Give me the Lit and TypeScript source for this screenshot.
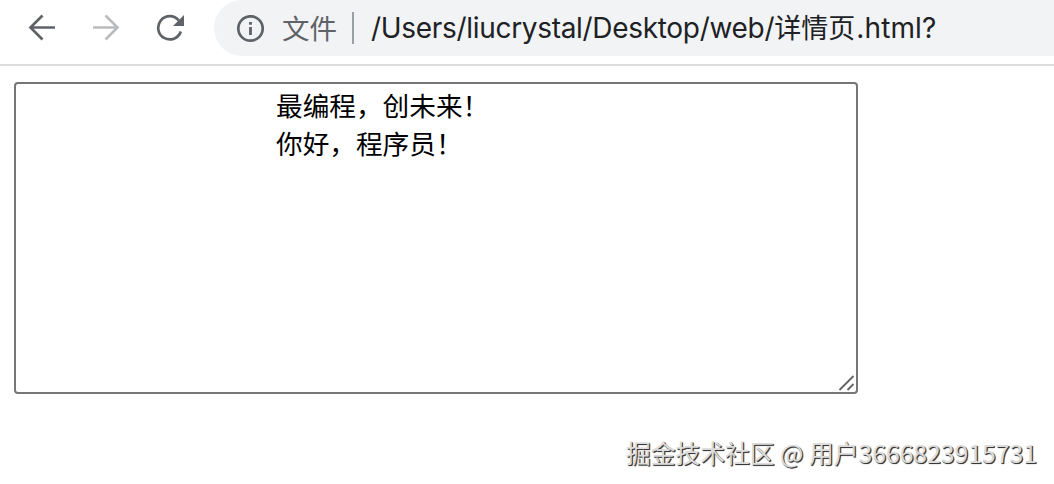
import { LitElement, html, css } from 'lit';
import { customElement, property } from 'lit/decorators.js';

@customElement('address-bar')
export class AddressBar extends LitElement {
  @property({ type: String }) scheme = '';
  @property({ type: String }) folder = '';
  @property({ type: String }) page = '';
  @property({ type: String }) suffix = '';

  static styles = css`
    :host {
      display: flex;
      align-items: center;
      flex: 1;
      height: 56px;
      padding-left: 22px;
      box-sizing: border-box;
      border-radius: 28px 0 0 28px;
      background: #f1f3f4;
      color: #202124;
      font-family: Inter, 'Noto Sans CJK SC', sans-serif;
      font-size: 28px;
      line-height: 56px;
      white-space: nowrap;
    }

    svg {
      display: block;
      width: 28px;
      height: 28px;
      margin-top: 1px;
      fill: none;
      stroke: #5f6368;
    }

    .scheme {
      width: 56px;
      margin-left: 18px;
      padding-bottom: 3px;
      color: #5f6368;
      font-family: 'Noto Sans CJK SC', sans-serif;
      font-size: 27.5px;
    }

    .divider {
      width: 2px;
      height: 32px;
      margin: 0 17px 0 14px;
      background: #9aa0a6;
    }

    .latin {
      letter-spacing: -0.31px;
    }

    .suffix {
      margin-left: 1px;
      letter-spacing: 0.15px;
    }

    .cjk {
      padding-bottom: 3px;
      font-family: 'Noto Sans CJK SC', sans-serif;
      font-size: 27px;
    }
  `;

  render() {
    return html`
      <svg viewBox="0 0 28 28">
        <circle cx="14.5" cy="13.5" r="12.2" stroke-width="2.7" />
        <path d="M14.5 12v8M14.5 7v2.8" stroke-width="2.8" />
      </svg>
      <span class="scheme">${this.scheme}</span>
      <span class="divider"></span>
      <span class="latin">${this.folder}</span>
      <span class="cjk">${this.page}</span>
      <span class="latin suffix">${this.suffix}</span>
    `;
  }
}

@customElement('app-root')
export class AppRoot extends LitElement {
  private lines = ['最编程，创未来！', '你好，程序员！'];

  static styles = css`
    :host {
      display: flex;
      flex-direction: column;
      height: 484px;
      overflow: hidden;
      background: #fff;
      font-family: 'Noto Sans CJK SC', sans-serif;
    }

    .toolbar {
      display: flex;
      align-items: flex-start;
      height: 66px;
      box-sizing: border-box;
      border-bottom: 2px solid #dadbdc;
    }

    .buttons {
      display: flex;
      gap: 36px;
      width: 214px;
      height: 56px;
      padding-left: 28px;
      box-sizing: border-box;
      align-items: center;
    }

    .buttons svg {
      display: block;
      width: 28px;
      height: 28px;
      fill: none;
      stroke: #5f6368;
      stroke-width: 2.7;
    }

    .buttons svg.disabled {
      stroke: #babcbe;
    }

    .buttons .head {
      fill: #5f6368;
      stroke: none;
    }

    .textarea {
      display: flex;
      flex-direction: column;
      width: 844px;
      height: 312px;
      margin: 16px 0 0 14px;
      padding: 2px 0 0 260px;
      box-sizing: border-box;
      border: 2px solid #767676;
      border-radius: 4px;
      color: #000;
      font-size: 26.67px;
      line-height: 38px;
    }

    .grip {
      width: 18px;
      height: 18px;
      margin: auto 0 0 auto;
      fill: none;
      stroke: #636363;
      stroke-width: 1.8;
    }

    .watermark {
      align-self: flex-end;
      margin: 40px 17px 0 0;
      color: #dcdcdc;
      font-size: 24.75px;
      line-height: 36px;
      white-space: nowrap;
      text-shadow: 1px 1px 1px #333, 1px 1px 0 #666;
    }
  `;

  render() {
    return html`
      <div class="toolbar">
        <div class="buttons">
          <svg viewBox="0 0 28 28">
            <path d="M27 13.5H3M14.5 1.5l-12 12 12 12" />
          </svg>
          <svg class="disabled" viewBox="0 0 28 28">
            <path d="M1 13.5h24M13.5 1.5l12 12-12 12" />
          </svg>
          <svg viewBox="0 0 28 28">
            <path d="M22.8 6.5A11.6 11.6 0 1 0 24.8 17.5" />
            <path class="head" d="M28 1v11H17z" />
          </svg>
        </div>
        <address-bar
          scheme="文件"
          folder="/Users/liucrystal/Desktop/web/"
          page="详情页"
          suffix=".html?"
        ></address-bar>
      </div>
      <div class="textarea">
        ${this.lines.map(line => html`<div>${line}</div>`)}
        <svg class="grip" viewBox="0 0 18 18">
          <path d="M1.5 16 15.5 2M9.5 16l6-6" />
        </svg>
      </div>
      <div class="watermark">掘金技术社区 @ 用户3666823915731</div>
    `;
  }
}

declare global {
  interface HTMLElementTagNameMap {
    'address-bar': AddressBar;
    'app-root': AppRoot;
  }
}
